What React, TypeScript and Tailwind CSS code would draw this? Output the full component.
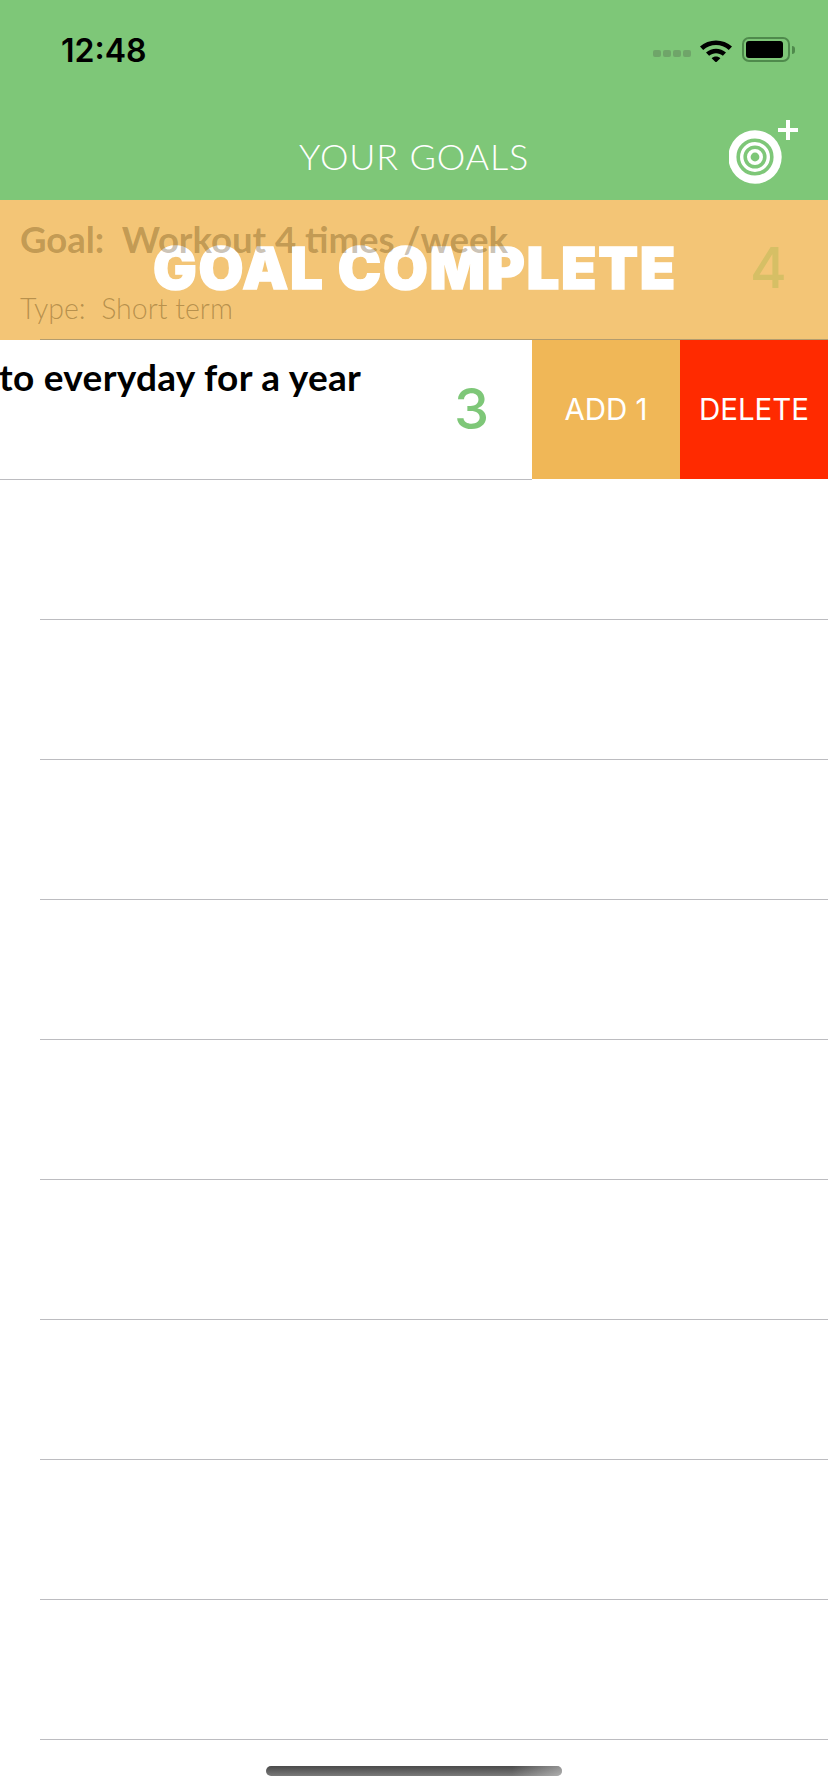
import React from "react";

const SANS = "font-['Lato','Noto_Sans',sans-serif]";

function StatusIcons() {
  return (
    <div className="flex items-center">
      {/* no-signal dots */}
      <div className="flex gap-[2px] mt-[8px]">
        <span className="w-[8px] h-[7px] rounded-[2px] bg-[#6fa569]" />
        <span className="w-[8px] h-[7px] rounded-[2px] bg-[#6fa569]" />
        <span className="w-[8px] h-[7px] rounded-[2px] bg-[#6fa569]" />
        <span className="w-[8px] h-[7px] rounded-[2px] bg-[#6fa569]" />
      </div>
      <svg width="32" height="24" viewBox="0 0 32 24" className="ml-[9px]">
        <path d="M0 8.5 C8.5 0.5 23.5 0.5 32 8.5 L28.8 12 C21.5 5.4 10.5 5.4 3.2 12 Z" fill="#000" />
        <path d="M6 14.6 C11.5 9.5 20.5 9.5 26 14.6 L22.9 17.8 C19 14.4 13 14.4 9.1 17.8 Z" fill="#000" />
        <path d="M11.6 20.2 C14 18 18 18 20.4 20.2 L16 24.5 Z" fill="#000" />
      </svg>
      <div className="ml-[10px] flex items-center">
        <div className="w-[48px] h-[25px] rounded-[7px] border-2 border-[#4f8a4c] p-[2px] flex">
          <div className="w-[37px] h-full rounded-[3px] bg-black" />
        </div>
        <div className="ml-[2px] w-[3px] h-[8px] rounded-r-[3px] bg-[#4f8a4c]" />
      </div>
    </div>
  );
}

function TargetAdd() {
  return (
    <svg width="72" height="66" viewBox="0 0 72 66">
      <circle cx="26" cy="37" r="26.7" fill="#fff" />
      <circle cx="26" cy="37" r="16.8" fill="none" stroke="#7ec778" strokeWidth="3.6" />
      <circle cx="26" cy="37" r="9.8" fill="none" stroke="#7ec778" strokeWidth="3.6" />
      <circle cx="26" cy="37" r="4.4" fill="#7ec778" />
      <path d="M49 10 H69 M59 0 V20" stroke="#fff" strokeWidth="4" fill="none" />
    </svg>
  );
}

function EmptyRow() {
  return (
    <div className="h-[140px] shrink-0 pl-[40px] flex flex-col justify-end">
      <div className="h-[1px] bg-[#bcbcc0]" />
    </div>
  );
}

export default function App() {
  return (
    <div className={`relative w-[828px] h-[1792px] overflow-hidden bg-white ${SANS}`}>
      {/* Header */}
      <div className="h-[200px] bg-[#7ec778] flex flex-col">
        <div className="h-[100px] pl-[61px] pr-[33px] pt-[31px] flex items-start justify-between">
          <span className="font-['Inter',sans-serif] text-[32px] leading-[40px] font-semibold text-black">12:48</span>
          <div className="pt-[6px]">
            <StatusIcons />
          </div>
        </div>
        <div className="relative flex-1">
          <p className="text-center text-[36px] leading-[40px] pt-[36px] font-light tracking-[0.8px] text-white">YOUR GOALS</p>
          <div className="absolute left-[729px] top-[20px]">
            <TargetAdd />
          </div>
        </div>
      </div>

      {/* Completed goal */}
      <div className="relative h-[140px] bg-[#f3c576]">
        <div className="absolute left-[153px] top-[38px]">
          <span className="font-['Inter',sans-serif] text-[58px] leading-[60px] font-black tracking-[1.7px] [-webkit-text-stroke:1.5px_#fff] text-white whitespace-nowrap">GOAL COMPLETE</span>
        </div>
        <div className="relative pl-[20px] pt-[19px]">
          <p className="text-[36.5px] leading-[40px] font-bold text-[#4a3000]/[.3] whitespace-nowrap">Goal:&nbsp; Workout 4 times /week</p>
          <p className="mt-[32px] text-[28.5px] leading-[34px] font-light text-[#4a3000]/[.36] whitespace-nowrap">Type:&nbsp; Short term</p>
        </div>
        <span className="absolute left-[750px] top-[36px] font-['Inter',sans-serif] text-[56px] leading-[64px] font-medium text-[#d6bf65]">4</span>
        <div className="absolute left-[40px] right-0 bottom-0 h-[1px] bg-[#b39c6e]" />
      </div>

      {/* Swiped row */}
      <div className="h-[140px] flex">
        <div className="relative w-[532px] shrink-0 border-b border-[#bcbcc0] overflow-hidden">
          <p className="-ml-[1px] pt-[17px] text-[37px] leading-[40px] font-bold tracking-[0.3px] text-black whitespace-nowrap">to everyday for a year</p>
          <span className="absolute left-[454px] top-[37px] font-['Inter',sans-serif] text-[56px] leading-[64px] font-medium text-[#7ec778]">3</span>
        </div>
        <div className="w-[148px] h-[139px] bg-[#f0b757] flex items-center justify-center font-['Inter',sans-serif] text-[29.5px] text-white">ADD 1</div>
        <div className="w-[148px] h-[139px] bg-[#ff2a00] flex items-center justify-center font-['Inter',sans-serif] text-[29.5px] text-white">DELETE</div>
      </div>

      <EmptyRow />
      <EmptyRow />
      <EmptyRow />
      <EmptyRow />
      <EmptyRow />
      <EmptyRow />
      <EmptyRow />
      <EmptyRow />
      <EmptyRow />

      {/* Home indicator */}
      <div className="absolute left-[266px] top-[1766px] w-[296px] h-[10px] rounded-[5px] overflow-hidden bg-gradient-to-b from-[#4a4a4a] to-[#7a7a7a]">
        <div className="ml-auto w-[50px] h-full bg-gradient-to-r from-transparent to-white/40" />
      </div>
    </div>
  );
}
